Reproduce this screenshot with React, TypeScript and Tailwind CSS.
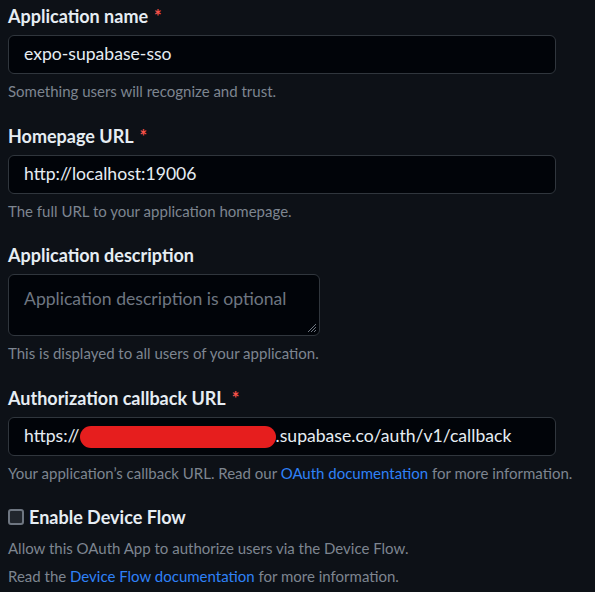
import type { ReactNode } from "react";

const font = { fontFamily: "Lato, 'Noto Sans', sans-serif" };

function Label({ children, required }: { children: ReactNode; required?: boolean }) {
  return (
    <div className="h-[22px] text-[18px] font-bold leading-[22px] text-[#e6edf3]">
      {children}
      {required && <span className="ml-[6px] text-[#f85149]">*</span>}
    </div>
  );
}

function Hint({ children }: { children: ReactNode }) {
  return <p className="mt-[6px] text-[15px] leading-[22px] text-[#7d8590]">{children}</p>;
}

function Input({ children }: { children: ReactNode }) {
  return (
    <div className="mt-2 flex h-[39px] w-[548px] items-center rounded-md border border-[#30363d] bg-[#010409] px-[15px] text-[17.6px] text-[#e6edf3]">
      {children}
    </div>
  );
}

export default function App() {
  return (
    <div className="min-h-screen bg-[#0d1117] px-2 pt-[5px]" style={font}>
      <Label required>Application name</Label>
      <Input>expo-supabase-sso</Input>
      <Hint>Something users will recognize and trust.</Hint>

      <div className="mt-[23px]">
        <Label required>Homepage URL</Label>
        <Input>http://localhost:19006</Input>
        <Hint>The full URL to your application homepage.</Hint>
      </div>

      <div className="mt-[22px]">
        <Label>Application description</Label>
        <div className="relative mt-2 h-[62px] w-[312px] rounded-md border border-[#30363d] bg-[#010409] px-[15px] pt-[13px] text-[17.6px] leading-[22px] text-[#6e7681]">
          Application description is optional
          <svg className="absolute bottom-[2px] right-[2px]" width="12" height="12" viewBox="0 0 12 12">
            <path d="M11 3 L3 11 M11 6 L6 11 M11 9 L9 11" stroke="#6e7681" strokeWidth="1" />
          </svg>
        </div>
        <Hint>This is displayed to all users of your application.</Hint>
      </div>

      <div className="mt-[23px]">
        <Label required>Authorization callback URL</Label>
        <Input>
          https://
          <span className="inline-block h-[22px] w-[196px] rounded-full bg-[#e61e1e]" />
          .supabase.co/auth/v1/callback
        </Input>
        <Hint>
          Your application’s callback URL. Read our <span className="text-[#2f81f7]">OAuth documentation</span> for
          more information.
        </Hint>
      </div>

      <div className="mt-[22px] flex h-[22px] items-center gap-[5px]">
        <span className="h-4 w-4 rounded-[3px] border-2 border-[#6e7681] bg-[#21262d]" />
        <span className="text-[18px] font-bold leading-[22px] text-[#e6edf3]">Enable Device Flow</span>
      </div>
      <p className="mt-[6px] text-[15px] leading-[28px] text-[#7d8590]">
        Allow this OAuth App to authorize users via the Device Flow.
      </p>
      <p className="text-[15px] leading-[28px] text-[#7d8590]">
        Read the <span className="text-[#2f81f7]">Device Flow documentation</span> for more information.
      </p>
    </div>
  );
}
